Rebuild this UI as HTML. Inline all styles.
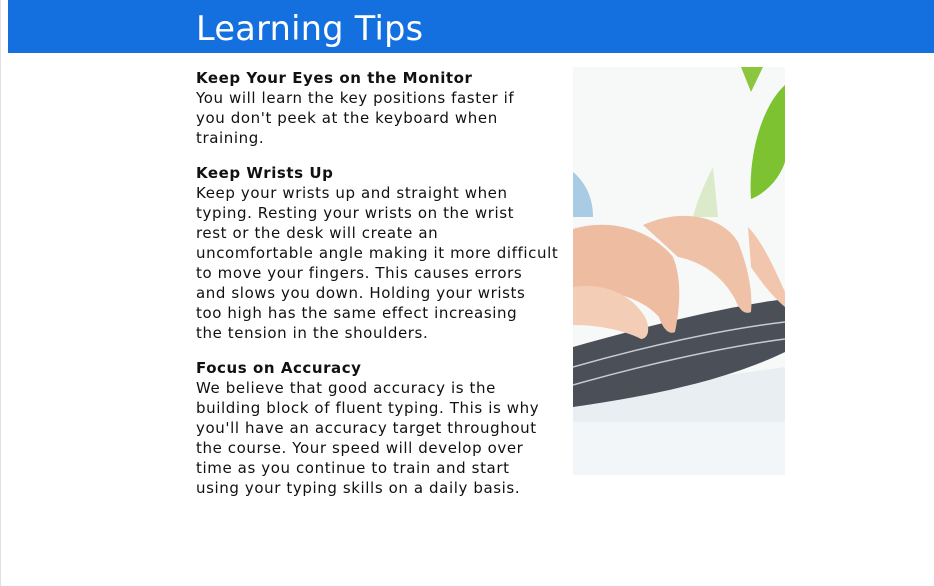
<!DOCTYPE html>
<html><head><style>
html,body{margin:0;padding:0;background:#fff;width:934px;height:586px;overflow:hidden}
body{position:relative;font-family:"DejaVu Sans","Liberation Sans",sans-serif;}
.lb{position:absolute;left:0;top:0;width:1px;height:586px;background:#e0e0e0}
.hdr{position:absolute;left:8px;top:0;width:926px;height:53px;background:#1570df}
.hdr h1{position:absolute;left:188px;top:9px;margin:0;font-weight:normal;font-size:33.5px;color:#fff;font-family:"DejaVu Sans",sans-serif;letter-spacing:0.3px}
.txt{position:absolute;left:196px;top:68px;width:370px;font-size:15px;line-height:20px;color:#111;white-space:nowrap;letter-spacing:0.6px}
.txt b{display:block;font-weight:bold;letter-spacing:0.55px}
.txt p{margin:0 0 15px 0}
.img{position:absolute;left:573px;top:67px;width:212px;height:408px}
</style></head><body>
<div class="lb"></div>
<div class="hdr"><h1>Learning Tips</h1></div>
<div class="txt">
<p><b>Keep Your Eyes on the Monitor</b>You will learn the key positions faster if<br>you don't peek at the keyboard when<br>training.</p>
<p><b>Keep Wrists Up</b>Keep your wrists up and straight when<br>typing. Resting your wrists on the wrist<br>rest or the desk will create an<br>uncomfortable angle making it more difficult<br>to move your fingers. This causes errors<br>and slows you down. Holding your wrists<br>too high has the same effect increasing<br>the tension in the shoulders.</p>
<p><b>Focus on Accuracy</b>We believe that good accuracy is the<br>building block of fluent typing. This is why<br>you'll have an accuracy target throughout<br>the course. Your speed will develop over<br>time as you continue to train and start<br>using your typing skills on a daily basis.</p>
</div>
<svg class="img" viewBox="0 0 212 408" xmlns="http://www.w3.org/2000/svg">
<rect width="212" height="408" fill="#f7f9f9"/>
<path d="M168 0 L190 0 L178 25 Z" fill="#8cc63f"/>
<path d="M212 18 C188 40 175 90 178 132 C195 125 207 110 212 95 Z" fill="#7cc231"/>
<path d="M120 150 C125 130 135 110 140 100 L145 150 Z" fill="#c8e0a8" opacity="0.6"/>
<path d="M0 105 C12 115 20 130 20 150 L0 150 Z" fill="#a9cbe3"/>
<path d="M0 330 L212 300 L212 408 L0 408 Z" fill="#e8eef1"/>
<path d="M0 280 C70 260 150 240 212 232 L212 285 C150 315 70 330 0 340 Z" fill="#4a4f58"/>
<path d="M0 300 C70 280 150 262 212 255" stroke="#c8ccd2" stroke-width="1.5" fill="none"/>
<path d="M0 318 C70 298 150 280 212 272" stroke="#c8ccd2" stroke-width="1.5" fill="none"/>
<path d="M0 162 C40 150 80 165 100 190 C108 210 108 235 102 265 C96 268 90 262 86 250 C70 232 40 222 0 222 Z" fill="#eebca1"/>
<path d="M70 158 C110 140 150 150 165 175 C175 200 180 225 178 245 C172 248 166 243 162 232 C150 210 130 195 105 190 Z" fill="#efc1a6"/>
<path d="M175 160 C190 175 203 205 212 225 L212 240 C200 230 188 215 178 200 Z" fill="#f2c6ad"/>
<path d="M0 220 C35 215 60 230 72 250 C78 262 75 272 68 272 C55 265 30 258 0 258 Z" fill="#f4cdb6"/>
<rect x="0" y="355" width="212" height="53" fill="#f2f6f8"/>
</svg>
</body></html>
